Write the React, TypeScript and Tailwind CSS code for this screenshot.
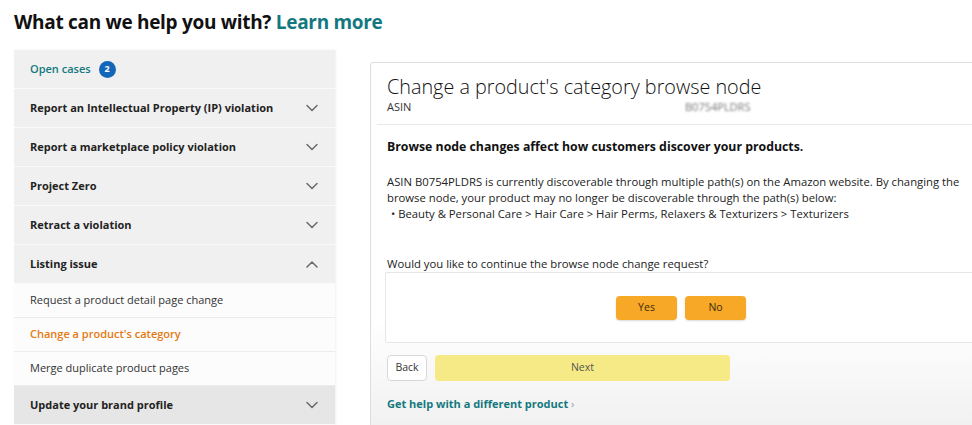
import React from 'react';

const font = { fontFamily: '"Open Sans", "Noto Sans", Arial, sans-serif' };

function Chevron({ up = false }: { up?: boolean }) {
  return (
    <svg width="12" height="8" viewBox="0 0 12 8" className="text-[#6b6b6b]">
      <path
        d={up ? 'M1 7 L6 2 L11 7' : 'M1 1.5 L6 6.5 L11 1.5'}
        fill="none"
        stroke="currentColor"
        strokeWidth="1.5"
        strokeLinecap="round"
        strokeLinejoin="round"
      />
    </svg>
  );
}

function SectionRow({ label, open = false, dark = false }: { label: string; open?: boolean; dark?: boolean }) {
  return (
    <div
      className={`flex h-[39px] items-center justify-between border-b border-[#fafafa] pl-[16px] pr-[17px] ${
        dark ? 'bg-[#e6e6e6]' : 'bg-[#f0f0f0]'
      }`}
    >
      <span className="text-[11px] font-bold text-[#222]">{label}</span>
      <Chevron up={open} />
    </div>
  );
}

function SubRow({ label, active = false }: { label: string; active?: boolean }) {
  return (
    <div className="flex h-[34px] items-center border-b border-[#ececec] bg-[#fcfcfc] pl-[16px]">
      <span className={`text-[11px] ${active ? 'font-semibold text-[#e47911]' : 'text-[#333]'}`}>{label}</span>
    </div>
  );
}

export default function App() {
  return (
    <div className="h-[425px] w-[972px] overflow-hidden bg-white" style={font}>
      <div className="pl-[14px] pt-[8px] text-[19px] font-bold leading-[28px] tracking-[-0.3px] text-[#111]">
        What can we help you with? <span className="text-[#13797f]">Learn more</span>
      </div>

      <div className="mt-[14px] flex items-start">
        {/* left menu */}
        <div className="ml-[14px] w-[321px] shrink-0 bg-[#f0f0f0] shadow-[1px_0_2px_rgba(0,0,0,0.06)]">
          <div className="flex h-[39px] items-center gap-[8px] border-b border-[#fafafa] pl-[16px]">
            <span className="text-[11px] font-semibold text-[#13797f]">Open cases</span>
            <span className="flex h-[17px] w-[17px] items-center justify-center rounded-full bg-[#1466b8] text-[9px] font-bold text-white">
              2
            </span>
          </div>
          <SectionRow label="Report an Intellectual Property (IP) violation" />
          <SectionRow label="Report a marketplace policy violation" />
          <SectionRow label="Project Zero" />
          <SectionRow label="Retract a violation" />
          <SectionRow label="Listing issue" open />
          <SubRow label="Request a product detail page change" />
          <SubRow label="Change a product's category" active />
          <SubRow label="Merge duplicate product pages" />
          <SectionRow label="Update your brand profile" dark />
        </div>

        {/* right card */}
        <div className="ml-[35px] mt-[12px] h-[370px] w-[620px] shrink-0 rounded-[3px] border border-[#dedede] bg-gradient-to-b from-white from-70% to-[#f0f0f0]">
          <div className="mx-[6px] border-b border-[#e8e8e8] px-[10px] pb-[10px] pt-[11px]">
            <div className="text-[19.8px] font-light leading-[26px] text-[#111]">Change a product's category browse node</div>
            <div className="flex text-[11px] leading-[14px] text-[#333]">
              <span className="w-[298px]">ASIN</span>
              <span className="text-[#777] blur-[1px]">B0754PLDRS</span>
            </div>
          </div>

          <div className="px-[16px]">
            <div className="mt-[13px] text-[12.3px] font-bold leading-[18px] text-[#111]">
              Browse node changes affect how customers discover your products.
            </div>
            <div className="mt-[18px] text-[11.3px] leading-[16px] text-[#222]">
              ASIN B0754PLDRS is currently discoverable through multiple path(s) on the Amazon website. By changing the
              browse node, your product may no longer be discoverable through the path(s) below:
              <div className="pl-[4px]">• Beauty &amp; Personal Care &gt; Hair Care &gt; Hair Perms, Relaxers &amp; Texturizers &gt; Texturizers</div>
            </div>
            <div className="mt-[34px] text-[11.3px] leading-[16px] text-[#222]">
              Would you like to continue the browse node change request?
            </div>
          </div>

          <div className="ml-[14px] flex h-[71px] justify-center gap-[8px] rounded-[2px] border border-[#e6e6e6] bg-white pt-[23px]">
            <div className="ml-[-12px] flex h-[24px] w-[61px] items-center justify-center rounded-[4px] bg-[#f7a826] text-[10.5px] text-[#3a2a10] shadow-[0_1px_2px_rgba(0,0,0,0.15)]">
              Yes
            </div>
            <div className="flex h-[24px] w-[61px] items-center justify-center rounded-[4px] bg-[#f7a826] text-[10.5px] text-[#3a2a10] shadow-[0_1px_2px_rgba(0,0,0,0.15)]">
              No
            </div>
          </div>

          <div className="mt-[12px] flex gap-[8px] pl-[16px]">
            <div className="flex h-[26px] w-[40px] items-center justify-center rounded-[4px] border border-[#d8d8d8] bg-white text-[10.5px] text-[#333]">
              Back
            </div>
            <div className="flex h-[26px] w-[295px] items-center justify-center rounded-[4px] bg-[#f5ea86] text-[10.5px] text-[#555]">
              Next
            </div>
          </div>

          <div className="mt-[15px] pl-[16px] text-[11px] font-bold leading-[16px] text-[#13797f]">
            Get help with a different product <span className="font-normal text-[#999]">›</span>
          </div>
        </div>
      </div>
    </div>
  );
}
